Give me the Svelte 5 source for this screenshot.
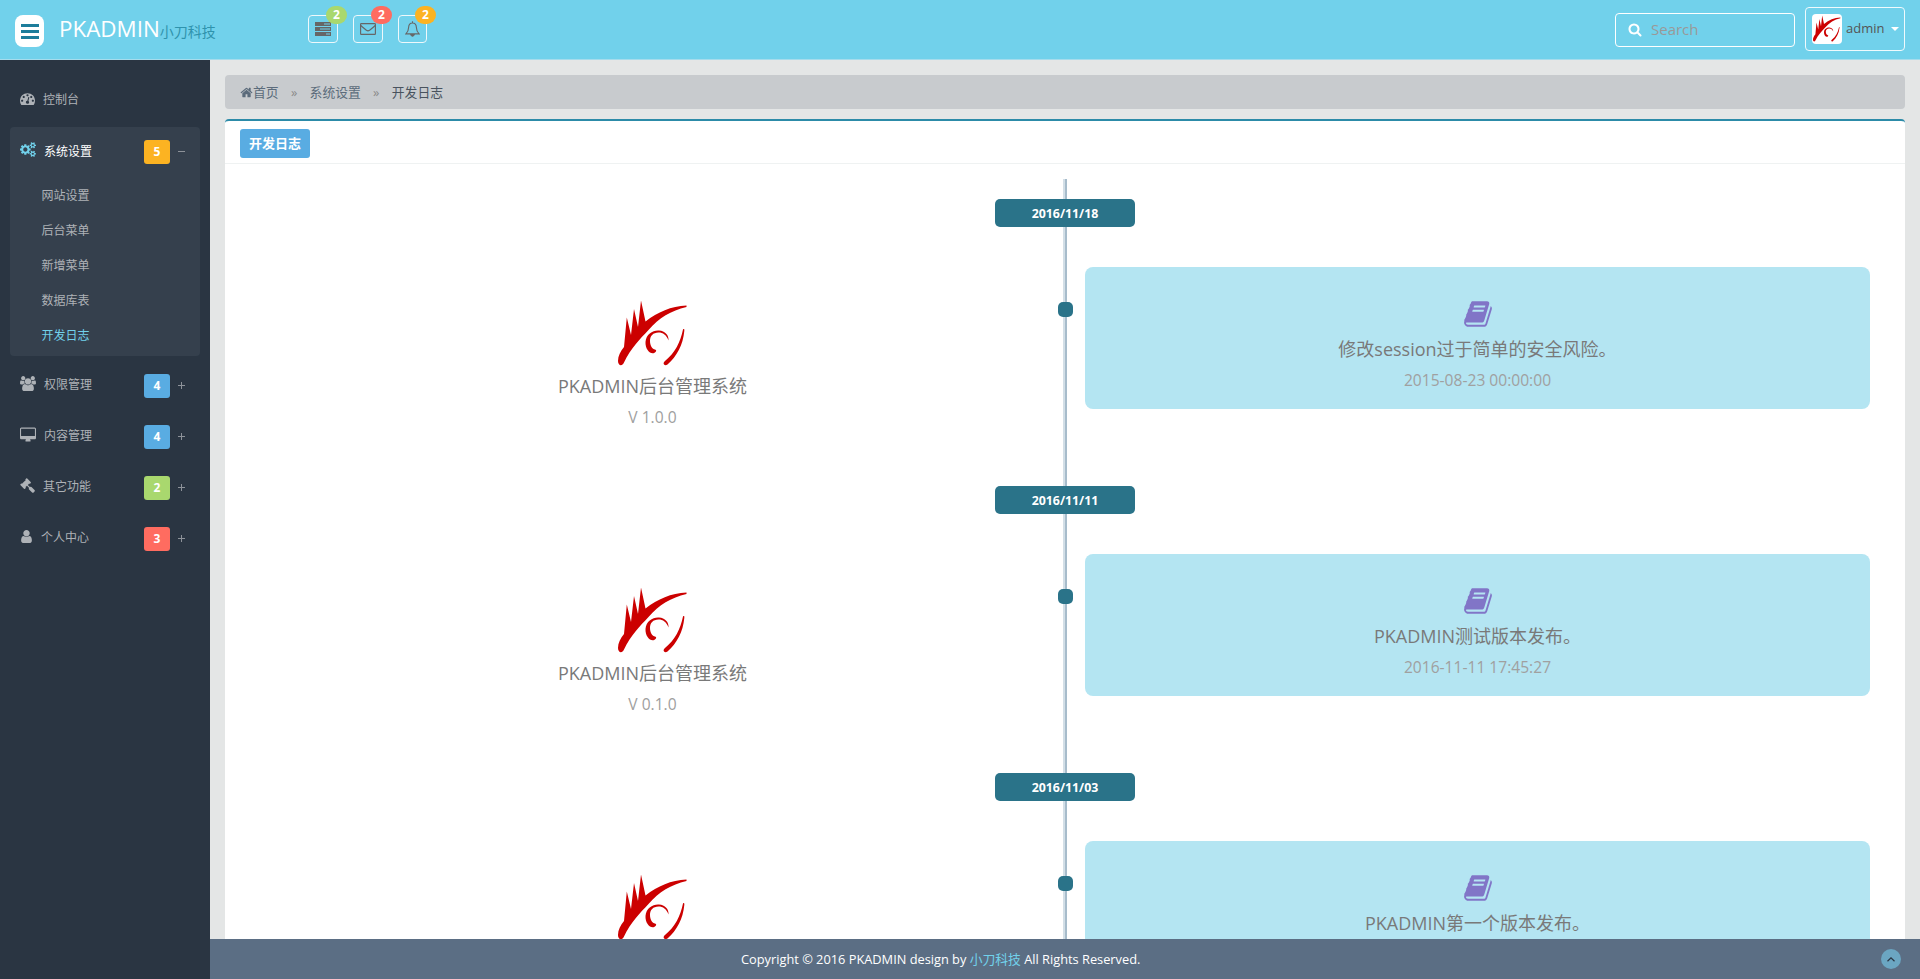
<script>
  const icons = {
    home: 'M1472 992v480q0 26-19 45t-45 19h-384v-384h-256v384h-384q-26 0-45-19t-19-45v-480q0-1 .5-3t.5-3l575-474 575 474q1 2 1 6zm223-69l-62 74q-8 9-21 11h-3q-13 0-21-7l-692-577-692 577q-12 8-24 7-13-2-21-11l-62-74q-8-10-7-23.5t11-21.5l719-599q32-26 76-26t76 26l244 204v-195q0-14 9-23t23-9h192q14 0 23 9t9 23v408l219 182q10 8 11 21.5t-7 23.5z',
    dashboard: 'M384 1152q0-53-37.5-90.5t-90.5-37.5-90.5 37.5-37.5 90.5 37.5 90.5 90.5 37.5 90.5-37.5 37.5-90.5zm192-448q0-53-37.5-90.5t-90.5-37.5-90.5 37.5-37.5 90.5 37.5 90.5 90.5 37.5 90.5-37.5 37.5-90.5zm428 481l101-382q6-26-7.5-48.5t-38.5-29.5-48 6.5-30 39.5l-101 382q-60 5-107 43.5t-63 98.5q-20 77 20 146t117 89 146-20 89-117q16-60-6-117t-72-91zm660-33q0-53-37.5-90.5t-90.5-37.5-90.5 37.5-37.5 90.5 37.5 90.5 90.5 37.5 90.5-37.5 37.5-90.5zm-640-640q0-53-37.5-90.5t-90.5-37.5-90.5 37.5-37.5 90.5 37.5 90.5 90.5 37.5 90.5-37.5 37.5-90.5zm448 192q0-53-37.5-90.5t-90.5-37.5-90.5 37.5-37.5 90.5 37.5 90.5 90.5 37.5 90.5-37.5 37.5-90.5zm320 448q0 261-141 483-19 29-54 29h-1402q-35 0-54-29-141-221-141-483 0-182 71-348t191-286 286-191 348-71 348 71 286 191 191 286 71 348z',
    cogs: 'M896 896q0-106-75-181t-181-75-181 75-75 181 75 181 181 75 181-75 75-181zm768 512q0-52-38-90t-90-38-90 38-38 90q0 53 37.5 90.5t90.5 37.5 90.5-37.5 37.5-90.5zm0-1024q0-52-38-90t-90-38-90 38-38 90q0 53 37.5 90.5t90.5 37.5 90.5-37.5 37.5-90.5zm-384 421v185q0 10-7 19.5t-16 10.5l-155 24q-11 35-32 76 34 48 90 115 7 11 7 20 0 12-7 19-23 30-82.5 89.5t-78.5 59.5q-11 0-21-7l-115-90q-37 19-77 31-11 108-23 155-7 24-30 24h-186q-11 0-20-7.5t-10-17.5l-23-153q-34-10-75-31l-118 89q-7 7-20 7-11 0-21-8-144-133-144-160 0-9 7-19 10-14 41-53t47-61q-23-44-35-82l-152-24q-10-1-17-9.5t-7-19.5v-185q0-10 7-19.5t16-10.5l155-24q11-35 32-76-34-48-90-115-7-11-7-20 0-12 7-20 22-30 82-89t79-59q11 0 21 7l115 90q34-18 77-32 11-108 23-154 7-24 30-24h186q11 0 20 7.5t10 17.5l23 153q34 10 75 31l118-89q8-7 20-7 11 0 21 8 144 133 144 160 0 8-7 19-12 16-42 54t-45 60q23 48 34 82l152 23q10 2 17 10.5t7 19.5zm640 533v140q0 16-149 31-12 27-30 52 51 113 51 138 0 4-4 7-122 71-124 71-8 0-46-47t-52-68q-20 2-30 2t-30-2q-14 21-52 68t-46 47q-2 0-124-71-4-3-4-7 0-25 51-138-18-25-30-52-149-15-149-31v-140q0-16 149-31 13-29 30-52-51-113-51-138 0-4 4-7 4-2 35-20t59-34 30-16q8 0 46 46.5t52 67.5q20-2 30-2t30 2q51-71 92-112l6-2q4 0 124 70 4 3 4 7 0 25-51 138 17 23 30 52 149 15 149 31zm0-1024v140q0 16-149 31-12 27-30 52 51 113 51 138 0 4-4 7-122 71-124 71-8 0-46-47t-52-68q-20 2-30 2t-30-2q-14 21-52 68t-46 47q-2 0-124-71-4-3-4-7 0-25 51-138-18-25-30-52-149-15-149-31v-140q0-16 149-31 13-29 30-52-51-113-51-138 0-4 4-7 4-2 35-20t59-34 30-16q8 0 46 46.5t52 67.5q20-2 30-2t30 2q51-71 92-112l6-2q4 0 124 70 4 3 4 7 0 25-51 138 17 23 30 52 149 15 149 31z',
    users: 'M593 896q-162 5-265 128h-134q-82 0-138-40.5t-56-118.5q0-353 124-353 6 0 43.5 21t97.5 42.5 119 21.5q67 0 133-23-5 37-5 66 0 139 81 256zm1071 637q0 120-73 189.5t-194 69.5h-874q-121 0-194-69.5t-73-189.5q0-53 3.5-103.5t14-109 26.5-108.5 43-97.5 62-81 85.5-53.5 111.5-20q10 0 43 21.5t73 48 107 48 135 21.5 135-21.5 107-48 73-48 43-21.5q61 0 111.5 20t85.5 53.5 62 81 43 97.5 26.5 108.5 14 109 3.5 103.5zm-1024-1277q0 106-75 181t-181 75-181-75-75-181 75-181 181-75 181 75 75 181zm704 384q0 159-112.5 271.5t-271.5 112.5-271.5-112.5-112.5-271.5 112.5-271.5 271.5-112.5 271.5 112.5 112.5 271.5zm576 225q0 78-56 118.5t-138 40.5h-134q-103-123-265-128 81-117 81-256 0-29-5-66 66 23 133 23 59 0 119-21.5t97.5-42.5 43.5-21q124 0 124 353zm-128-609q0 106-75 181t-181 75-181-75-75-181 75-181 181-75 181 75 75 181z',
    desktop: 'M1792 1056v-832q0-13-9.500-22.500t-22.500-9.500h-1600q-13 0-22.500 9.500t-9.500 22.500v832q0 13 9.500 22.500t22.500 9.500h1600q13 0 22.500-9.500t9.500-22.500zm128-832v1088q0 66-47 113t-113 47h-544q0 37 16 77.500t32 71 16 43.500q0 26-19 45t-45 19h-512q-26 0-45-19t-19-45q0-14 16-44t32-70 16-78h-544q-66 0-113-47t-47-113v-1088q0-66 47-113t113-47h1600q66 0 113 47t47 113z',
    gavel: 'M1771 1536q0 53-37 90l-107 108q-39 37-91 37-53 0-90-37l-363-364q-38-36-38-90 0-53 43-96l-256-256-126 126q-14 14-34 14t-34-14q2 2 12.5 12t12.500 13 10 11.500 10 13.500 6 13.500 5.500 16.500 1.500 18q0 38-28 68-3 3-16.500 18t-19 20.500-18.500 16.500-22 15.500-22 9-26 4.500q-40 0-68-28l-408-408q-28-28-28-68 0-13 4.500-26t9-22 15.500-22 16.500-18.500 20.500-19 18-16.500q30-28 68-28 10 0 18 1.500t16.500 5.500 13.500 6 13.500 10 11.500 10 13 12.500 12 12.500q-14-14-14-34t14-34l348-348q14-14 34-14t34 14q-2-2-12.500-12t-12.500-13-10-11.500-10-13.500-6-13.500-5.500-16.500-1.500-18q0-38 28-68 3-3 16.500-18t19-20.500 18.500-16.500 22-15.500 22-9 26-4.500q40 0 68 28l408 408q28 28 28 68 0 13-4.500 26t-9 22-15.500 22-16.500 18.500-20.500 19-18 16.500q-30 28-68 28-10 0-18-1.500t-16.500-5.500-13.500-6-13.500-10-11.500-10-13-12.500-12-12.500q14 14 14 34t-14 34l-126 126 256 256q43-43 96-43 52 0 91 37l363 363q37 39 37 91z',
    user: 'M1408 1399q0 109-62.500 187t-150.500 78h-854q-88 0-150.500-78t-62.500-187q0-85 8.500-160.500t31.500-152 58.500-131 94-89 134.500-34.500q131 128 313 128t313-128q76 0 134.500 34.500t94 89 58.500 131 31.500 152 8.500 160.500zm-256-887q0 159-112.500 271.500t-271.500 112.500-271.500-112.500-112.500-271.500 112.500-271.500 271.500-112.500 271.500 112.500 112.500 271.500z',
    book: 'M1703 478q40 57 18 129l-275 906q-19 64-76.5 107.5t-122.5 43.5h-923q-77 0-148.5-53.5t-99.5-131.5q-24-67-2-127 0-4 3-27t4-37q1-8-3-21.500t-3-19.500q2-11 8-21t16.500-23.500 16.500-23.500q23-38 45-91.500t30-91.500q3-10 .5-30t-.5-28q3-11 17-28t17-23q21-36 42-92t25-90q1-9-2.500-32t.5-28q4-13 22-30.500t22-22.500q19-26 42.500-84.500t27.500-96.500q1-8-3-25.500t-2-26.500q2-8 9-18t18-23 17-21q8-12 16.500-30.500t15-35 16-36 19.500-32 26.500-23.500 36-11.500 47.500 5.500l-1 3q38-9 51-9h761q74 0 114 56t18 130l-274 906q-36 119-71.500 153.500t-128.500 34.500h-869q-27 0-38 15-11 16-1 43 24 70 144 70h923q29 0 56-15.500t35-41.500l300-987q7-22 5-57 38 15 59 43zm-1064 2q-4 13 2 22.500t20 9.500h608q13 0 25.500-9.500t16.500-22.500l21-64q4-13-2-22.500t-20-9.500h-608q-13 0-25.500 9.500t-16.500 22.500zm-83 256q-4 13 2 22.500t20 9.500h608q13 0 25.500-9.500t16.500-22.500l21-64q4-13-2-22.500t-20-9.500h-608q-13 0-25.500 9.500t-16.500 22.500z',
    search: 'M1216 832q0-185-131.500-316.500t-316.500-131.500-316.500 131.500-131.500 316.500 131.500 316.500 316.500 131.500 316.500-131.500 131.500-316.500zm512 832q0 52-38 90t-90 38q-54 0-90-38l-343-342q-179 124-399 124-143 0-273.500-55.500t-225-150-150-225-55.500-273.500 55.500-273.500 150-225 225-150 273.500-55.500 273.500 55.500 225 150 150 225 55.500 273.500q0 220-124 399l343 343q37 37 37 90z'
  };

  const submenu = ['网站设置', '后台菜单', '新增菜单', '数据库表', '开发日志'];
  const menu = [
    { icon: 'users', w: 16, vb: 1920, label: '权限管理', count: 4, tone: 'blue' },
    { icon: 'desktop', w: 16, vb: 1920, label: '内容管理', count: 4, tone: 'blue' },
    { icon: 'gavel', w: 15, vb: 1792, label: '其它功能', count: 2, tone: 'green' },
    { icon: 'user', w: 13, vb: 1536, label: '个人中心', count: 3, tone: 'red' }
  ];
  const log = [
    { date: '2016/11/18', version: 'V 1.0.0', title: '修改session过于简单的安全风险。', time: '2015-08-23 00:00:00' },
    { date: '2016/11/11', version: 'V 0.1.0', title: 'PKADMIN测试版本发布。', time: '2016-11-11 17:45:27' },
    { date: '2016/11/03', title: 'PKADMIN第一个版本发布。' }
  ];
</script>

{#snippet icon(name, w, h, vb)}
  <svg class="ico" width={w} height={h} viewBox="0 0 {vb} 1792" fill="currentColor"><path d={icons[name]} /></svg>
{/snippet}

{#snippet logo(size)}
  <svg class="ico" width={size} height={size} viewBox="0 0 70 70" fill="#c00">
    <path d="M0 62C0 57 2.500 52 6 48L8.800 18.500L13 36L16 10L20 28L23 1.500L27.500 22.500C40 13 53 7 68.500 6.500V8C53 11.500 41 19 30.500 31C22 40 13 49 6 63.500C4 68 0 66.500 0 62Z" />
    <path d="M37.500 53C34 57 27 51.500 27.500 43C28 35 35 31 41 31.500C47 32 51 36 50.500 41.500C48.500 36 45 33.500 40.500 33.500C35 33.500 32 37 32 42C32 47 34.500 50 37 50.500C38.500 51 38.500 52 37.500 53Z" />
    <path d="M65 30.500C66 29.500 66.500 30 66.300 32C65 46 59 57 49.500 65.500C46.500 67.500 44 64.500 47 62C57 54 62.500 43 65 30.500Z" />
  </svg>
{/snippet}

<div class="app">
  <header class="top">
    <button class="toggle" aria-label="menu"><i></i><i></i><i></i></button>
    <div class="brand">PKADMIN<small>小刀科技</small></div>
    <div class="notices">
      <div class="notice">
        <svg width="16" height="14" viewBox="0 0 16 14" fill="#666"><path fill-rule="evenodd" d="M0 0h16v4H0zM0 5h16v4H0zM0 10h16v4H0zM9 1.500v1h6v-1zM5 6.500v1h10v-1zM11 11.500v1h4v-1z" /></svg>
        <b class="green">2</b>
      </div>
      <div class="notice">
        <svg width="16" height="12" viewBox="0 0 16 12" fill="none" stroke="#666" stroke-width="1.150"><rect x=".6" y=".6" width="14.800" height="10.800" rx=".6" /><path d="M.8 2.500C3 4.500 5 6 6.500 7.300Q8 8.500 9.500 7.300C11 6 13 4.500 15.200 2.500" /></svg>
        <b class="red">2</b>
      </div>
      <div class="notice bell">
        <svg width="15" height="16" viewBox="0 0 15 16" fill="none" stroke="#666" stroke-width="1.100"><path d="M7.500.3V2M7.500 2C4.700 2 3.700 4.200 3.600 6.500C3.500 9.500 2.500 11.500.9 12.900H14.100C12.500 11.500 11.500 9.500 11.400 6.500C11.300 4.200 10.300 2 7.500 2Z" /><path d="M5.700 13.500Q6 15.200 7.500 15.200Q9 15.200 9.300 13.500Z" fill="#666" /></svg>
        <b class="amber">2</b>
      </div>
    </div>
    <div class="search">{@render icon('search', 14, 15, 1792)}<span>Search</span></div>
    <div class="account"><span class="avatar">{@render logo(28)}</span><span class="name">admin</span><i class="caret"></i></div>
  </header>

  <div class="body">
    <nav class="side">
      <div class="row first">{@render icon('dashboard', 15, 15, 1792)}<span>控制台</span></div>
      <div class="group">
        <div class="row open">
          <em>{@render icon('cogs', 16, 15, 1920)}</em><span>系统设置</span>
          <b class="amber">5</b><i class="sign minus"></i>
        </div>
        {#each submenu as item, n}
          <div class="sub" class:active={n === 4}>{item}</div>
        {/each}
      </div>
      {#each menu as m}
        <div class="row">
          {@render icon(m.icon, m.w, 15, m.vb)}<span>{m.label}</span>
          <b class={m.tone}>{m.count}</b><i class="sign plus"></i>
        </div>
      {/each}
    </nav>

    <div class="main">
      <div class="content">
        <div class="crumbs">
          {@render icon('home', 13, 13, 1792)}<span>首页</span><i>»</i><span>系统设置</span><i>»</i><span class="here">开发日志</span>
        </div>
        <section class="panel">
          <div class="head"><span>开发日志</span></div>
          <div class="timeline">
            {#each log as entry}
              <div class="entry">
                <div class="date">{entry.date}</div>
                <div class="cols">
                  <div class="left">
                    {@render logo(70)}
                    {#if entry.version}
                      <h4>PKADMIN后台管理系统</h4>
                      <p>{entry.version}</p>
                    {/if}
                  </div>
                  <div class="dot"></div>
                  <div class="card">
                    {@render icon('book', 30, 30, 1792)}
                    <h4>{entry.title}</h4>
                    {#if entry.time}<p>{entry.time}</p>{/if}
                  </div>
                </div>
              </div>
            {/each}
          </div>
        </section>
      </div>
      <footer>
        <div>Copyright © 2016 PKADMIN design by <a href="#top">小刀科技</a> All Rights Reserved.</div>
        <button class="up" aria-label="top"><svg width="8" height="5" viewBox="0 0 8 5" fill="none" stroke="#2a3542" stroke-width="1.200"><path d="M.5 4.300L4 .9L7.500 4.300" /></svg></button>
      </footer>
    </div>
  </div>
</div>

<style>
  :global(body) { margin: 0; overflow: hidden; }
  * { box-sizing: border-box; }
  .app { height: 979px; display: flex; flex-direction: column; overflow: hidden; background: #e4e6e6; color: #797979; font: 13px/20px "Open Sans", "Noto Sans CJK SC", sans-serif; }
  .ico { display: block; flex: none; overflow: visible; }
  h4, p { margin: 0; font-weight: 400; }
  button { border: 0; padding: 0; }
  .green { background: #a9d86e; }
  .red { background: #ff6c60; }
  .amber { background: #fcb322; }
  .blue { background: #59ace2; }

  .top { height: 60px; flex: none; display: flex; align-items: flex-start; padding: 0 15px; background: #71d1eb; border-bottom: 1px solid #a6dcec; }
  .toggle { width: 29px; height: 32px; margin-top: 15px; border-radius: 8px; background: #fff; display: flex; flex-direction: column; align-items: center; justify-content: center; gap: 3px; }
  .toggle i { width: 18px; height: 3px; background: #1d7d9b; }
  .brand { width: 248px; margin: 14px 0 0 15px; color: #fff; font-size: 22.400px; line-height: 30px; white-space: nowrap; }
  .brand small { font-size: 14px; color: #2f93ad; }
  .notices { display: flex; gap: 15px; margin: 15px 0 0 1px; }
  .notice { position: relative; width: 30px; height: 28px; border: 1px solid #eef8fb; border-radius: 4px; display: flex; align-items: center; justify-content: center; }
  .bell { width: 29px; }
  .notice b { position: absolute; top: -10px; right: -10px; width: 21px; height: 18px; border-radius: 9px; color: #fff; font-size: 12px; line-height: 18px; text-align: center; }
  .search { width: 180px; height: 34px; margin: 13px 10px 0 auto; padding-left: 12px; border: 1px solid #fff; border-radius: 4px; display: flex; align-items: center; gap: 9px; color: #fff; }
  .search .ico { margin-bottom: 2px; }
  .search span { margin-bottom: 2px; font-size: 15px; color: #999; }
  .account { width: 100px; height: 44px; margin-top: 7px; padding-left: 6px; border: 1px solid #f0fafd; border-radius: 4px; display: flex; align-items: center; color: #555; }
  .avatar { width: 30px; height: 30px; border-radius: 4px; background: #fff; padding: 1px; }
  .name { margin: 0 7px 3px 4px; }
  .caret { border: 4px solid transparent; border-top-color: #fff; border-bottom: 0; }

  .body { flex: 1; display: flex; min-height: 0; }
  .side { width: 210px; padding: 14px 10px 0; background: #2a3542; color: #aeb2b7; font-size: 12px; }
  .row { height: 51px; padding: 0 14px 0 10px; display: flex; align-items: center; }
  .row > span { margin: 0 auto 1px 8px; }
  .row > .ico, .row em { margin-bottom: 4px; }
  .first { margin-bottom: 2px; }
  .first > span { margin-bottom: -1px; }
  .first > .ico { margin-bottom: 3px; }
  .group { height: 229px; margin-bottom: 4px; background: #35404d; border-radius: 4px; }
  .open { height: 51px; color: #fff; }
  .open em { margin-bottom: 6px; color: #71d1eb; }
  .open > span { margin-bottom: 2px; }
  .row b { width: 26px; height: 24px; border-radius: 3px; color: #fff; text-align: center; font-size: 12px; line-height: 24px; }
  .open b { margin-bottom: 1px; }
  .sign { width: 7px; height: 7px; margin: 0 1px 3px 8px; background: linear-gradient(#8d9299, #8d9299) 0 3px / 7px 1px no-repeat; }
  .plus { margin-bottom: 1px; background: linear-gradient(#8d9299, #8d9299) 0 3px / 7px 1px no-repeat, linear-gradient(#8d9299, #8d9299) 3px 0 / 1px 7px no-repeat; }
  .sub { height: 35px; padding-left: 31.500px; line-height: 35px; }
  .active { color: #71d1eb; }

  .main { flex: 1; min-width: 0; display: flex; flex-direction: column; }
  .content { flex: 1; min-height: 0; overflow: hidden; padding: 15px 15px 0; }
  .crumbs { height: 34px; margin-bottom: 10px; padding: 0 0 1px 15px; border-radius: 4px; background: #c8cbce; color: #5b6b7b; display: flex; align-items: center; font-size: 12.800px; }
  .crumbs .ico { margin-top: 1px; }
  .crumbs i { width: 31px; text-align: center; font-style: normal; color: #8a8a8a; }
  .crumbs .here { color: #49535e; }
  .panel { background: #fff; border-top: 2px solid #2c8ba8; border-radius: 4px 4px 0 0; }
  .head { height: 43px; padding: 8px 15px 0; border-bottom: 1px solid #eff2f2; }
  .head span { display: block; width: 70px; height: 29px; border-radius: 3px; background: #59ace2; color: #fff; font-weight: 700; line-height: 29px; text-align: center; }
  .timeline { margin-top: 15px; padding-top: 20px; background: linear-gradient(90deg, #d3dfe7 50%, #a7bccb 50%) 50% 0 / 4px 100% no-repeat; }
  .entry { height: 287px; }
  .date { width: 140px; height: 28px; margin: 0 auto 40px; border-radius: 5px; background: #2a7389; color: #fff; font-weight: 700; line-height: 29px; text-align: center; font-size: 12.350px; }
  .cols { display: grid; grid-template-columns: 785px 40px 785px; justify-content: center; align-items: start; }
  .left, .card { display: flex; flex-direction: column; align-items: center; }
  .left { padding-top: 32px; }
  .card { height: 142px; padding-top: 32px; background: #b4e5f2; border-radius: 8px; }
  .card .ico { color: #8175c7; }
  .dot { width: 15px; height: 15px; margin: 35px 0 0 13px; border-radius: 5px; background: #2a7389; }
  h4 { font-size: 18px; line-height: 24px; }
  .left h4 { margin-top: 5px; }
  .card h4 { margin-top: 8px; }
  p { margin-top: 7px; font-size: 15.600px; line-height: 24px; color: #a0a0a0; }
  footer { height: 40px; flex: none; background: #5b6e84; color: #fff; display: flex; align-items: center; justify-content: space-between; padding: 0 19px 0 531px; font-size: 12.800px; }
  footer div { padding-bottom: 1px; }
  footer a { color: #71d1eb; text-decoration: none; }
  .up { width: 20px; height: 20px; border-radius: 50%; background: #6ba6c2; display: flex; align-items: center; justify-content: center; }
</style>
